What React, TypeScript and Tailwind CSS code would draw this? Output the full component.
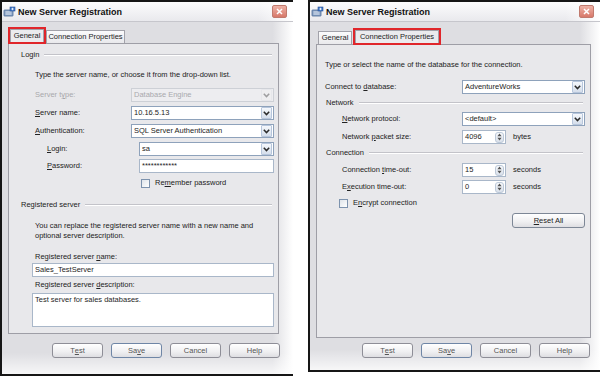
import React from "react";

function Chevron() {
  return (
    <svg width="7" height="5" viewBox="0 0 7 5">
      <path d="M0.8 0.8 L3.5 3.6 L6.2 0.8" fill="none" stroke="#2b2b2b" strokeWidth="1.5" />
    </svg>
  );
}

function Combo({ value, w, disabled }: { value: string; w: string; disabled?: boolean }) {
  return (
    <div
      className={`flex h-[14px] items-center border ${w} ${
        disabled ? "border-[#cdd0d6] bg-[#ededf0] text-[#a9a9ad]" : "border-[#8ea2bb] bg-white text-[#1e1e1e]"
      }`}
    >
      <span className="flex-1 overflow-hidden whitespace-nowrap pl-[2px]">{value}</span>
      <span
        className={`mr-px flex h-[12px] w-[11px] items-center justify-center rounded-[1px] border ${
          disabled ? "border-[#dcdfe4] bg-[#f0f0f2] opacity-40" : "border-[#b7c6dc] bg-[linear-gradient(#f5f8fc,#d5deeb)]"
        }`}
      >
        <Chevron />
      </span>
    </div>
  );
}

function TextBox({ value, w, h }: { value: string; w: string; h: string }) {
  return (
    <div className={`flex items-start border border-[#a9b7c9] bg-white pl-[2px] pt-[1px] text-[#1e1e1e] ${w} ${h}`}>
      {value}
    </div>
  );
}

function Spin({ value }: { value: string }) {
  return (
    <div className="flex h-[14px] w-[44px] items-center border border-[#a9b7c9] bg-white">
      <span className="flex-1 pl-[2px] text-[#1e1e1e]">{value}</span>
      <span className="mr-px flex h-[11px] w-[9px] items-center justify-center rounded-[3px] border border-[#bcc8d8] bg-[linear-gradient(#f7f9fc,#d9e0ea)]">
        <svg width="5" height="8" viewBox="0 0 5 8">
          <path d="M2.5 0.6 L4.6 3.2 H0.4Z M2.5 7.4 L4.6 4.8 H0.4Z" fill="#555" />
        </svg>
      </span>
    </div>
  );
}

function Check() {
  return <div className="h-[9px] w-[9px] border border-[#7d93ae] bg-[linear-gradient(135deg,#dfe4ea,#ffffff)]" />;
}

function Btn({ children, def }: { children: React.ReactNode; def?: boolean }) {
  return (
    <div
      className={`flex h-[15px] w-[51px] items-center justify-center rounded-[3px] border ${
        def ? "border-[#6f86a6]" : "border-[#8e8e97]"
      } bg-[linear-gradient(#ffffff,#efeff1_60%,#dedee2)] text-[#555]`}
    >
      {children}
    </div>
  );
}

function Header({ label, lineMr }: { label: string; lineMr: string }) {
  return (
    <div className="flex h-[10px] items-center">
      <span>{label}</span>
      <div className={`ml-[5px] h-[2px] flex-1 border-t border-b border-t-[#c3c3c9] border-b-white ${lineMr}`} />
    </div>
  );
}

function AppIcon() {
  return (
    <svg width="13" height="12" viewBox="0 0 13 12">
      <rect x="1" y="4" width="9" height="6" rx="0.5" fill="#8aa2c4" stroke="#4a6a98" strokeWidth="0.8" />
      <rect x="2.5" y="5.5" width="6" height="1" fill="#dfe8f4" />
      <rect x="2.5" y="7.5" width="6" height="1" fill="#dfe8f4" />
      <rect x="7" y="1" width="5" height="4" fill="#3f78c8" stroke="#2a5296" strokeWidth="0.6" />
      <path d="M9.5 1.8 V4.2 M8.3 3 H10.7" stroke="#fff" strokeWidth="0.8" />
    </svg>
  );
}

function Close() {
  return (
    <div className="ml-auto mr-[6px] flex h-[13px] w-[15px] items-center justify-center rounded-[2px] border border-[#c07a6e] bg-[linear-gradient(#eeb2a6,#d7786a)]">
      <svg width="7" height="7" viewBox="0 0 7 7">
        <path d="M1 1 L6 6 M6 1 L1 6" stroke="#fff" strokeWidth="1.5" />
      </svg>
    </div>
  );
}

function TitleBar() {
  return (
    <div className="flex h-[20px] items-center border-b border-[#c6c6cc] bg-[linear-gradient(to_right,rgba(255,255,255,0)_88%,#ffffff),linear-gradient(#fcfcfd,#e9e9ed)]">
      <div className="ml-[1px] flex">
        <AppIcon />
      </div>
      <span className="ml-[2px] text-[9px] font-bold leading-[10px] text-[#111]">New Server Registration</span>
      <Close />
    </div>
  );
}

const bodyBg =
  "bg-[linear-gradient(to_bottom,rgba(255,255,255,0)_94%,rgba(255,255,255,0.75)),linear-gradient(to_right,#dedee2_93%,#ffffff)]";

function LeftDialog() {
  return (
    <div className="flex h-[376px] w-[293px] flex-col border-y-2 border-l-2 border-[#161616]">
      <TitleBar />
      <div className={`flex flex-1 flex-col ${bodyBg}`}>
        <div className="relative z-10 -mb-px ml-[6px] mt-[5px] flex h-[17px] items-end">
          <div className="flex h-[17px] w-[38px] border-2 border-[#e0262b]">
            <div className="flex flex-1 items-center justify-center border-x border-t border-[#a2a2aa] bg-[#ebebee] text-[#1e1e1e]">
              General
            </div>
          </div>
          <div className="mb-px flex h-[13px] w-[79px] items-center justify-center border-x border-t border-[#a2a2aa] bg-[linear-gradient(#fbfbfc,#e9e9ec)] text-[#1e1e1e]">
            Connection Properties
          </div>
        </div>
        <div className="ml-[6px] flex h-[291px] w-[271px] flex-col border border-[#9e9ea6] bg-[#e8e8eb] text-[#222]">
          <div className="ml-[12px] mt-[6px]">
            <Header label="Login" lineMr="mr-[6px]" />
          </div>
          <div className="ml-[26px] mt-[10px] h-[10px]">Type the server name, or choose it from the drop-down list.</div>
          <div className="ml-[26px] mt-[8px] flex h-[14px] items-center">
            <span className="w-[96px] text-[#a8a8ac]">
              Server t<u>y</u>pe:
            </span>
            <Combo value="Database Engine" w="w-[143px]" disabled />
          </div>
          <div className="ml-[26px] mt-[4px] flex h-[14px] items-center">
            <span className="w-[96px]">
              <u>S</u>erver name:
            </span>
            <Combo value="10.16.5.13" w="w-[143px]" />
          </div>
          <div className="ml-[26px] mt-[4px] flex h-[14px] items-center">
            <span className="w-[96px]">
              <u>A</u>uthentication:
            </span>
            <Combo value="SQL Server Authentication" w="w-[143px]" />
          </div>
          <div className="ml-[38px] mt-[4px] flex h-[14px] items-center">
            <span className="w-[92px]">
              <u>L</u>ogin:
            </span>
            <Combo value="sa" w="w-[135px]" />
          </div>
          <div className="ml-[38px] mt-[3px] flex h-[14px] items-center">
            <span className="w-[92px]">
              <u>P</u>assword:
            </span>
            <TextBox value="************" w="w-[135px]" h="h-[14px]" />
          </div>
          <div className="ml-[132px] mt-[5px] flex h-[10px] items-center gap-[5px]">
            <Check />
            <span>
              Re<u>m</u>ember password
            </span>
          </div>
          <div className="ml-[12px] mt-[12px]">
            <Header label="Registered server" lineMr="mr-[6px]" />
          </div>
          <div className="ml-[26px] mt-[11px] h-[20px]">
            You can replace the registered server name with a new name and
            <br />
            optional server description.
          </div>
          <div className="ml-[26px] mt-[11px] h-[10px]">
            Registered server <u>n</u>ame:
          </div>
          <div className="ml-[23px] mt-[1px]">
            <TextBox value="Sales_TestServer" w="w-[242px]" h="h-[14px]" />
          </div>
          <div className="ml-[26px] mt-[3px] h-[10px]">
            Registered server <u>d</u>escription:
          </div>
          <div className="ml-[23px] mt-[3px]">
            <TextBox value="Test server for sales databases." w="w-[242px]" h="h-[34px]" />
          </div>
        </div>
        <div className="mt-[9px] flex gap-[8px] pl-[50px]">
          <Btn>
            T<u>e</u>st
          </Btn>
          <Btn def>
            Sa<u>v</u>e
          </Btn>
          <Btn>Cancel</Btn>
          <Btn>Help</Btn>
        </div>
      </div>
    </div>
  );
}

function RightDialog() {
  return (
    <div className="flex h-[372px] w-[292px] flex-col border-y-2 border-l-2 border-[#161616]">
      <TitleBar />
      <div className={`flex flex-1 flex-col ${bodyBg}`}>
        <div className="relative z-10 -mb-px ml-[8px] mt-[6px] flex h-[17px] items-end">
          <div className="mb-px flex h-[13px] w-[34px] items-center justify-center border-x border-t border-[#a2a2aa] bg-[linear-gradient(#fbfbfc,#e9e9ec)] text-[#1e1e1e]">
            General
          </div>
          <div className="ml-[1px] flex h-[17px] w-[88px] border-2 border-[#e0262b]">
            <div className="flex flex-1 items-center justify-center border-x border-t border-[#a2a2aa] bg-[#ebebee] text-[#1e1e1e]">
              Connection Properties
            </div>
          </div>
        </div>
        <div className="ml-[6px] flex h-[294px] w-[275px] flex-col border border-[#9e9ea6] bg-[#e8e8eb] text-[#222]">
          <div className="ml-[8px] mt-[15px] h-[10px]">Type or select the name of the database for the connection.</div>
          <div className="ml-[8px] mt-[10px] flex h-[14px] items-center">
            <span className="w-[137px]">
              Connect to <u>d</u>atabase:
            </span>
            <Combo value="AdventureWorks" w="w-[123px]" />
          </div>
          <div className="ml-[9px] mt-[4px]">
            <Header label="Network" lineMr="mr-[7px]" />
          </div>
          <div className="ml-[25px] mt-[4px] flex h-[14px] items-center">
            <span className="w-[120px]">
              <u>N</u>etwork protocol:
            </span>
            <Combo value="<default>" w="w-[123px]" />
          </div>
          <div className="ml-[25px] mt-[4px] flex h-[14px] items-center">
            <span className="w-[120px]">
              Network <u>p</u>acket size:
            </span>
            <Spin value="4096" />
            <span className="ml-[7px]">bytes</span>
          </div>
          <div className="ml-[9px] mt-[4px]">
            <Header label="Connection" lineMr="mr-[7px]" />
          </div>
          <div className="ml-[25px] mt-[5px] flex h-[14px] items-center">
            <span className="w-[120px]">
              Connection <u>t</u>ime-out:
            </span>
            <Spin value="15" />
            <span className="ml-[7px]">seconds</span>
          </div>
          <div className="ml-[25px] mt-[3px] flex h-[14px] items-center">
            <span className="w-[120px]">
              E<u>x</u>ecution time-out:
            </span>
            <Spin value="0" />
            <span className="ml-[7px]">seconds</span>
          </div>
          <div className="ml-[22px] mt-[4px] flex h-[10px] items-center gap-[5px]">
            <Check />
            <span>
              E<u>n</u>crypt connection
            </span>
          </div>
          <div className="mr-[5px] mt-[5px] self-end">
            <div className="flex h-[15px] w-[73px] items-center justify-center rounded-[3px] border border-[#7d8796] bg-[linear-gradient(#ffffff,#efeff1_60%,#dedee2)] text-[#222]">
              <span>
                <u>R</u>eset All
              </span>
            </div>
          </div>
        </div>
        <div className="mt-[5px] flex gap-[8px] pl-[52px]">
          <Btn>
            T<u>e</u>st
          </Btn>
          <Btn def>
            Sa<u>v</u>e
          </Btn>
          <Btn>Cancel</Btn>
          <Btn>Help</Btn>
        </div>
      </div>
    </div>
  );
}

export default function App() {
  return (
    <div className="flex h-[376px] w-[600px] items-start justify-between overflow-hidden bg-white font-['Liberation_Sans',Arial,sans-serif] text-[7.5px] leading-[10px]">
      <LeftDialog />
      <RightDialog />
    </div>
  );
}
